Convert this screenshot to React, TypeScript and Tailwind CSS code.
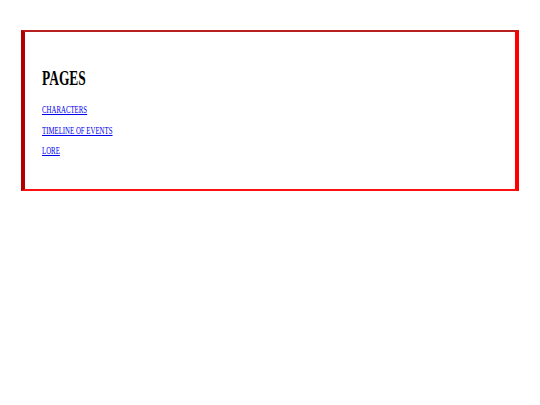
import React from 'react';

const pages = ['CHARACTERS', 'TIMELINE OF EVENTS', 'LORE'];

const App = () => {
  return (
    <div className="min-h-[405px] w-full bg-white pl-[21px] pt-[30px] pr-[21px] font-['Liberation_Serif',serif]">
      <div className="border-x-4 border-y-2 border-l-[#b00000] border-t-[#b82020] border-r-[#ff0000] border-b-[#ff1010] pt-[35px] pb-[32px] pl-[17px]">
        <h1 className="mb-[15px] origin-left scale-x-[0.61] text-[22px] leading-[22px] font-bold text-black whitespace-nowrap">
          PAGES
        </h1>
        <div className="flex flex-col gap-[8.5px]">
          {pages.map((page) => (
            <a
              key={page}
              href="#"
              className="block origin-left scale-x-[0.65] text-[10.5px] leading-[12px] text-[#0000ee] underline whitespace-nowrap"
            >
              {page}
            </a>
          ))}
        </div>
      </div>
    </div>
  );
};

export default App;
